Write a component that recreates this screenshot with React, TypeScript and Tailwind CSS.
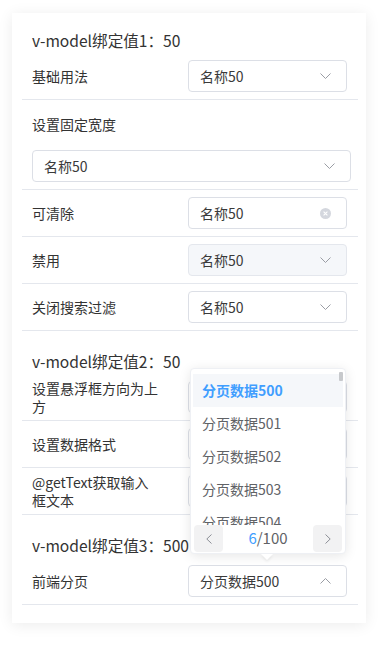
import type { ReactNode } from "react";

const FONT = { fontFamily: '"Noto Sans CJK SC", "Noto Sans", sans-serif' };

function Chevron({ up = false }: { up?: boolean }) {
  return (
    <svg width="11" height="6" viewBox="0 0 11 6" className={up ? "rotate-180" : ""}>
      <polyline points="0.5,0.5 5.5,5.5 10.5,0.5" fill="none" stroke="#9a9da4" strokeWidth="1" />
    </svg>
  );
}

function ClearIcon() {
  return (
    <svg width="11" height="11" viewBox="0 0 11 11">
      <circle cx="5.5" cy="5.5" r="5.5" fill="#d4d7de" />
      <path d="M3.6 3.6 L7.4 7.4 M7.4 3.6 L3.6 7.4" stroke="#fff" strokeWidth="1.1" />
    </svg>
  );
}

function Select({
  value,
  disabled = false,
  clearable = false,
  up = false,
  className = "w-[159px]",
}: {
  value: string;
  disabled?: boolean;
  clearable?: boolean;
  up?: boolean;
  className?: string;
}) {
  return (
    <div
      className={`flex h-8 items-center justify-between rounded-[4px] border pl-[11px] pr-[15px] text-[14px] text-[#3a3a3a] ${
        disabled ? "border-[#e4e7ed] bg-[#f5f7fa]" : "border-[#dcdfe6] bg-white"
      } ${className}`}
    >
      <span>{value}</span>
      {clearable ? <ClearIcon /> : <Chevron up={up} />}
    </div>
  );
}

// 46px tall rows plus the 1px divider underneath
function Row({ label, children }: { label: string; children: ReactNode }) {
  return (
    <div className="box-content flex min-h-[46px] items-center justify-between border-b border-[#e4e7ed] pl-[10px] pr-[11px]">
      <div className="w-[127px] text-[14px] leading-[18px] text-[#333]">{label}</div>
      {children}
    </div>
  );
}

function Title({ text, first = false }: { text: string; first?: boolean }) {
  return (
    <div
      className={`pl-[10px] pb-[2px] text-[15.6px] leading-[22px] text-[#333] ${
        first ? "pt-[16px]" : "pt-[19px]"
      }`}
    >
      {text}
    </div>
  );
}

function PageArrow({ dir }: { dir: "left" | "right" }) {
  return (
    <div className="flex h-[27px] w-[29px] items-center justify-center rounded-[4px] bg-[#f2f2f3]">
      <svg width="6" height="10" viewBox="0 0 6 10">
        <polyline
          points={dir === "left" ? "5.5,0.5 0.8,5 5.5,9.5" : "0.5,0.5 5.2,5 0.5,9.5"}
          fill="none"
          stroke="#8c8f96"
          strokeWidth="1"
        />
      </svg>
    </div>
  );
}

function Dropdown() {
  const items = ["分页数据500", "分页数据501", "分页数据502", "分页数据503", "分页数据504"];
  return (
    <div className="absolute bottom-[calc(100%+11px)] left-[2px] z-10 w-[156px]">
      <div className="relative h-[186px] rounded-[4px] border border-[#eef0f4] bg-white px-[2px] pt-[5px] pb-[3px] shadow-[0_2px_12px_rgba(0,0,0,0.1)]">
        <div className="h-[151px] overflow-hidden">
          {items.map((it, i) => (
            <div
              key={it}
              className={`flex h-[33px] items-center px-[9px] text-[14px] ${
                i === 0 ? "bg-[#f5f7fa] font-bold text-[#409eff]" : "text-[#606266]"
              }`}
            >
              {it}
            </div>
          ))}
        </div>
        <div className="flex h-[27px] items-center justify-between px-px">
          <PageArrow dir="left" />
          <div className="text-[15px] text-[#606266]">
            <span className="text-[#409eff]">6</span>/100
          </div>
          <PageArrow dir="right" />
        </div>
        <div className="absolute right-[2px] top-[3px] h-[9px] w-[4px] rounded-[1px] bg-[#c7c9cc]" />
      </div>
      <div className="absolute left-[71px] top-full h-0 w-0 border-x-[6px] border-t-[6px] border-x-transparent border-t-white drop-shadow-[0_2px_1px_rgba(0,0,0,0.06)]" />
    </div>
  );
}

export default function App() {
  return (
    <div className="min-h-[651px] bg-white pt-[13px] pb-[27px]" style={FONT}>
      <div className="ml-[12px] w-[354px] bg-white pl-[10px] pr-[8px] pb-[18px] shadow-[0_2px_14px_rgba(0,0,0,0.08)]">
        <Title text="v-model绑定值1：50" first />
        <Row label="基础用法">
          <Select value="名称50" />
        </Row>
        <div className="border-b border-[#e4e7ed] pt-[15px] pb-[7px]">
          <div className="pl-[10px] text-[14px] leading-[18px] text-[#333]">设置固定宽度</div>
          <Select value="名称50" className="mt-[17px] ml-[10px] mr-[7px]" />
        </div>
        <Row label="可清除">
          <Select value="名称50" clearable />
        </Row>
        <Row label="禁用">
          <Select value="名称50" disabled />
        </Row>
        <Row label="关闭搜索过滤">
          <Select value="名称50" />
        </Row>

        <Title text="v-model绑定值2：50" />
        <Row label="设置悬浮框方向为上方">
          <Select value="名称50" />
        </Row>
        <Row label="设置数据格式">
          <Select value="名称50" />
        </Row>
        <Row label="@getText获取输入框文本">
          <Select value="名称50" />
        </Row>

        <Title text="v-model绑定值3：500" />
        <Row label="前端分页">
          <div className="relative">
            <Select value="分页数据500" up />
            <Dropdown />
          </div>
        </Row>
      </div>
    </div>
  );
}
